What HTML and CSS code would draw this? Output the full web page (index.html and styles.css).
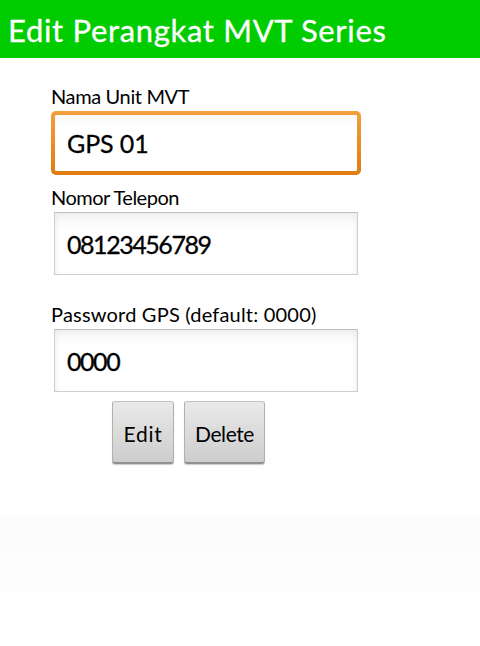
FILE: index.html
```
<!DOCTYPE html>
<html lang="id">
<head>
  <meta charset="UTF-8" />
  <meta name="viewport" content="width=device-width, initial-scale=1.0" />
  <title>Edit Perangkat MVT Series</title>
  <link rel="stylesheet" href="styles.css">
</head>
<body>
  <header class="title-bar">
    <h1>Edit Perangkat MVT Series</h1>
  </header>

  <form class="device-form">
    <div class="field focused">
      <label class="label-name" for="nama">Nama Unit MVT</label>
      <input class="input-name" type="text" id="nama" value="GPS 01">
    </div>
    <div class="field">
      <label class="label-phone" for="telepon">Nomor Telepon</label>
      <input type="text" id="telepon" value="08123456789">
    </div>
    <div class="field password">
      <label class="label-password" for="password">Password GPS (default: 0000)</label>
      <input type="text" id="password" value="0000">
    </div>
    <div class="buttons">
      <button class="btn-edit" type="button">Edit</button>
      <button class="btn-delete" type="button">Delete</button>
    </div>
  </form>

  <div class="bottom-panel"></div>
</body>
</html>
```

FILE: styles.css
```
* { box-sizing: border-box; }

body {
  margin: 0;
  min-height: 646px;
  display: flex;
  flex-direction: column;
  font-family: Lato, "Open Sans", sans-serif;
  background-color: #fff;
  color: #000;
}

.title-bar {
  height: 58px;
  padding: 0 8px;
  background-color: #00cc00;
  color: #fff;
}

h1 {
  margin: 0;
  font-size: 31px;
  font-weight: 400;
  line-height: 61px;
  letter-spacing: 0.67px;
  white-space: nowrap;
  -webkit-text-stroke: 0.3px;
}

.device-form {
  height: 458px;
  padding: 28px 0 0 51px;
}

.field {
  width: 310px;
  height: 101px;
}

.field.password {
  margin-top: 16px;
}

label {
  display: block;
  height: 25px;
  font-size: 20px;
  line-height: 21px;
  white-space: nowrap;
}

.label-name { letter-spacing: -0.37px; }
.label-phone { letter-spacing: -0.5px; }
.label-password { letter-spacing: 0.2px; }

input {
  display: block;
  width: 304px;
  height: 63px;
  margin: 0 3px;
  padding: 0 12px;
  border: 1px solid #cfcfcf;
  border-top-color: #bdbdbd;
  border-radius: 0;
  outline: none;
  background: linear-gradient(#f0f0f0, #fafafa 8px, #fff 18px);
  box-shadow: inset 4px 0 6px -4px #e8e8e8, inset -4px 0 6px -4px #e8e8e8;
  font-family: inherit;
  font-size: 25px;
  letter-spacing: -1.45px;
  color: #000;
  -webkit-text-stroke: 0.3px;
}

/* orange ring around the active input */
.focused input {
  width: 310px;
  height: 64px;
  margin: 0;
  padding: 0 12px;
  border: 4px solid transparent;
  border-radius: 5px;
  background:
    linear-gradient(#f8f8f8, #fff 14px) padding-box,
    linear-gradient(#f2a03c, #e07c10) border-box;
  box-shadow: none;
  letter-spacing: -0.1px;
}

.buttons {
  display: flex;
  gap: 10px;
  margin: -4px 0 0 61px;
}

.buttons button {
  height: 63px;
  padding: 2px 0 0;
  border: 1px solid #b0b0b0;
  border-top-color: #c4c4c4;
  border-bottom: 2px solid #909090;
  border-radius: 3px;
  background: linear-gradient(#e9e9e9, #cdcdcd);
  box-shadow: 0 1px 1px #ccc;
  font-family: inherit;
  font-size: 21px;
  color: #000;
}

.btn-edit {
  width: 62px;
  letter-spacing: 0.7px;
}

.btn-delete {
  width: 81px;
  letter-spacing: -0.4px;
}

.bottom-panel {
  flex: 1;
  background: linear-gradient(#fbfbfb, #fff 100px);
}
```
